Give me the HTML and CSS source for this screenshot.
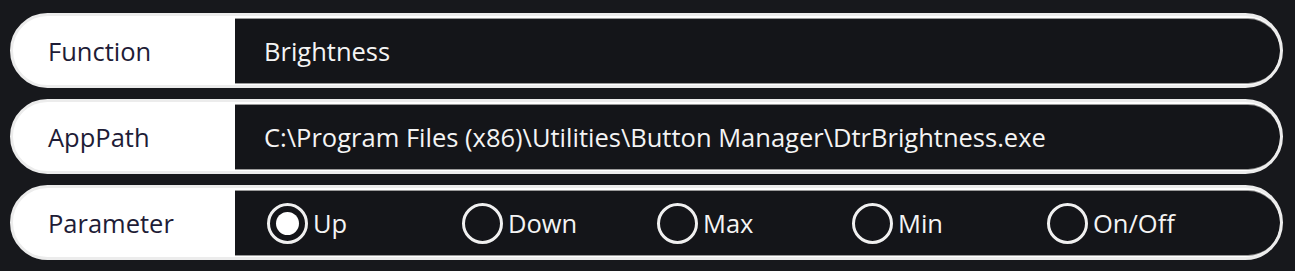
FILE: index.html
```html
<!DOCTYPE html>
<html>
<head>
<meta charset="utf-8">
<link rel="stylesheet" href="styles.css">
</head>
<body>
<div class="panel">
  <div class="row">
    <div class="label">Function</div>
    <div class="value">Brightness</div>
  </div>
  <div class="row">
    <div class="label">AppPath</div>
    <div class="value">C:\Program Files (x86)\Utilities\Button Manager\DtrBrightness.exe</div>
  </div>
  <div class="row">
    <div class="label">Parameter</div>
    <div class="value options">
      <div class="opt"><span class="radio checked"></span><span>Up</span></div>
      <div class="opt"><span class="radio"></span><span>Down</span></div>
      <div class="opt"><span class="radio"></span><span>Max</span></div>
      <div class="opt"><span class="radio"></span><span>Min</span></div>
      <div class="opt"><span class="radio"></span><span>On/Off</span></div>
    </div>
  </div>
</div>
</body>
</html>
```
FILE: styles.css
```css
html, body {
  margin: 0;
  padding: 0;
  background: #17181c;
  height: 100%;
}
body {
  font-family: "Open Sans", "Noto Sans", sans-serif;
  font-size: 25.5px;
}
.panel {
  display: flex;
  flex-direction: column;
  gap: 11px;
  padding: 13px 12px 0 10px;
}
.row {
  display: flex;
  height: 75px;
  box-sizing: border-box;
  border: 3px solid #ececec;
  border-radius: 38px;
  background: #ffffff;
  overflow: hidden;
}
.label {
  width: 222px;
  flex: none;
  display: flex;
  align-items: center;
  padding-left: 35px;
  box-sizing: border-box;
  color: #1e1c36;
}
.value {
  flex: 1;
  display: flex;
  align-items: center;
  margin: 3px 0 2px 0;
  background: #141519;
  border-radius: 0 35px 35px 0;
  box-shadow: 0 -1px 0 #9a9a9a, 0 1px 0 #9a9a9a;
  color: #f4f4f4;
  padding-left: 29px;
}
.options {
  padding-left: 32px;
}
.opt {
  width: 195px;
  display: flex;
  align-items: center;
  gap: 5px;
}
.radio {
  width: 41px;
  height: 41px;
  box-sizing: border-box;
  border: 3px solid #f0f0f0;
  border-radius: 50%;
  display: flex;
  align-items: center;
  justify-content: center;
}
.radio.checked::after {
  content: "";
  width: 23px;
  height: 23px;
  border-radius: 50%;
  background: #ffffff;
}
```
